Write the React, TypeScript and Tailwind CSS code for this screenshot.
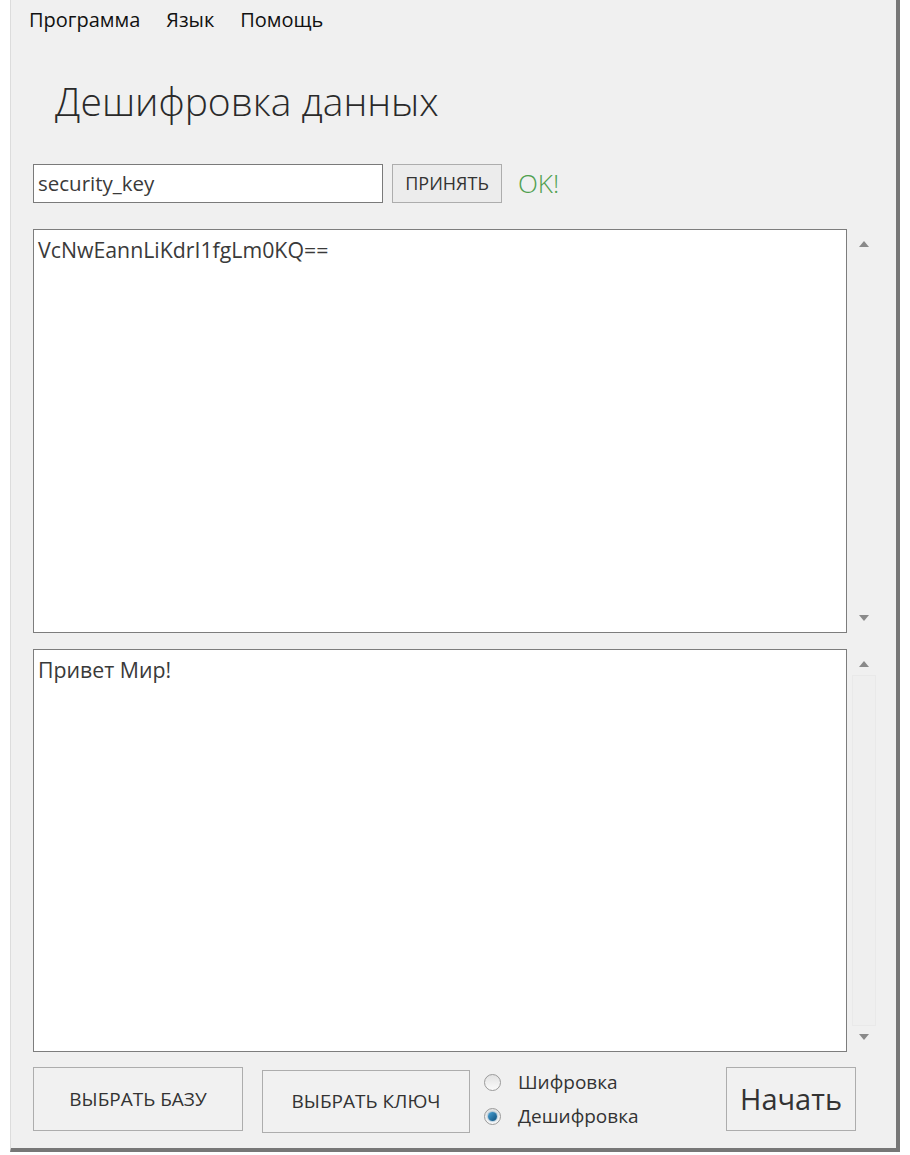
import React from 'react';

const font = { fontFamily: '"Open Sans", "Noto Sans", sans-serif' };

function ScrollArrows({ track }: { track?: boolean }) {
  return (
    <div className="w-[26px] flex flex-col items-center justify-between py-[12px]">
      <svg width="10" height="6" viewBox="0 0 10 6">
        <path d="M0 6 L5 0 L10 6 Z" fill="#8a8a8a" />
      </svg>
      {track && <div className="flex-1 w-[24px] my-[8px] border border-[#e9e9e9] bg-[#efefef]" />}
      <svg width="10" height="6" viewBox="0 0 10 6">
        <path d="M0 0 L5 6 L10 0 Z" fill="#8a8a8a" />
      </svg>
    </div>
  );
}

function Radio({ checked, label }: { checked?: boolean; label: string }) {
  return (
    <label className="flex items-center gap-[17px] h-[34px]">
      <span className="w-[17px] h-[17px] rounded-full border border-[#9a9a9a] bg-gradient-to-b from-[#e2e2e2] to-[#fafafa] flex items-center justify-center">
        {checked && (
          <span className="w-[9px] h-[9px] rounded-full bg-gradient-to-br from-[#4aa3d6] to-[#0b4f7c] shadow-[0_0_2px_#1d6fa5]" />
        )}
      </span>
      <span className="text-[19px] text-[#333]">{label}</span>
    </label>
  );
}

export default function App() {
  return (
    <div className="w-[910px] h-[1155px] bg-white" style={font}>
      <div className="ml-[10px] w-[890px] h-[1152px] bg-[#f0f0f0] border-l border-[#dcdcdc] border-r-[4px] border-r-[#777] border-b-[4px] border-b-[#777] flex flex-col">
        {/* menu */}
        <div className="flex gap-[26px] pl-[18px] pt-[5px] h-[40px] text-[20px] text-[#111]">
          <span>Программа</span>
          <span>Язык</span>
          <span>Помощь</span>
        </div>

        <div className="pl-[22px] pr-[18px] flex flex-col">
          <h1 className="pl-[22px] mt-[37px] h-[87px] text-[39px] font-light text-[#2a2a2a] leading-[48px]">
            Дешифровка данных
          </h1>

          <div className="flex items-center h-[39px]">
            <div className="w-[350px] h-[39px] border border-[#7a7a7a] bg-white flex items-center px-[4px] text-[20.5px] text-[#3a3a3a]">
              security_key
            </div>
            <button className="ml-[9px] w-[110px] h-[39px] border border-[#adadad] bg-[#ececec] text-[18px] text-[#333]">
              ПРИНЯТЬ
            </button>
            <span className="ml-[16px] text-[26px] font-light text-[#4fa04f]">OK!</span>
          </div>

          <div className="flex gap-[4px] mt-[26px] h-[404px]">
            <div className="w-[814px] border border-[#7d7d7d] bg-white px-[4px] pt-[4px] text-[21.3px] text-[#3a3a3a]">
              VcNwEannLiKdrI1fgLm0KQ==
            </div>
            <ScrollArrows />
          </div>

          <div className="flex gap-[4px] mt-[16px] h-[403px]">
            <div className="w-[814px] border border-[#7d7d7d] bg-white px-[4px] pt-[4px] text-[21.3px] text-[#3a3a3a]">
              Привет Мир!
            </div>
            <ScrollArrows track />
          </div>

          <div className="flex items-start mt-[15px]">
            <button className="w-[210px] h-[64px] border border-[#adadad] bg-[#f1f1f1] text-[19px] text-[#333]">
              ВЫБРАТЬ БАЗУ
            </button>
            <button className="ml-[19px] mt-[3px] w-[208px] h-[63px] border border-[#adadad] bg-[#f1f1f1] text-[19px] text-[#333]">
              ВЫБРАТЬ КЛЮЧ
            </button>
            <div className="ml-[14px] flex flex-col -mt-[2px]">
              <Radio label="Шифровка" />
              <Radio checked label="Дешифровка" />
            </div>
            <button className="ml-auto mr-[22px] w-[130px] h-[64px] border border-[#adadad] bg-[#f1f1f1] text-[29px] text-[#333]">
              Начать
            </button>
          </div>
        </div>
      </div>
    </div>
  );
}
